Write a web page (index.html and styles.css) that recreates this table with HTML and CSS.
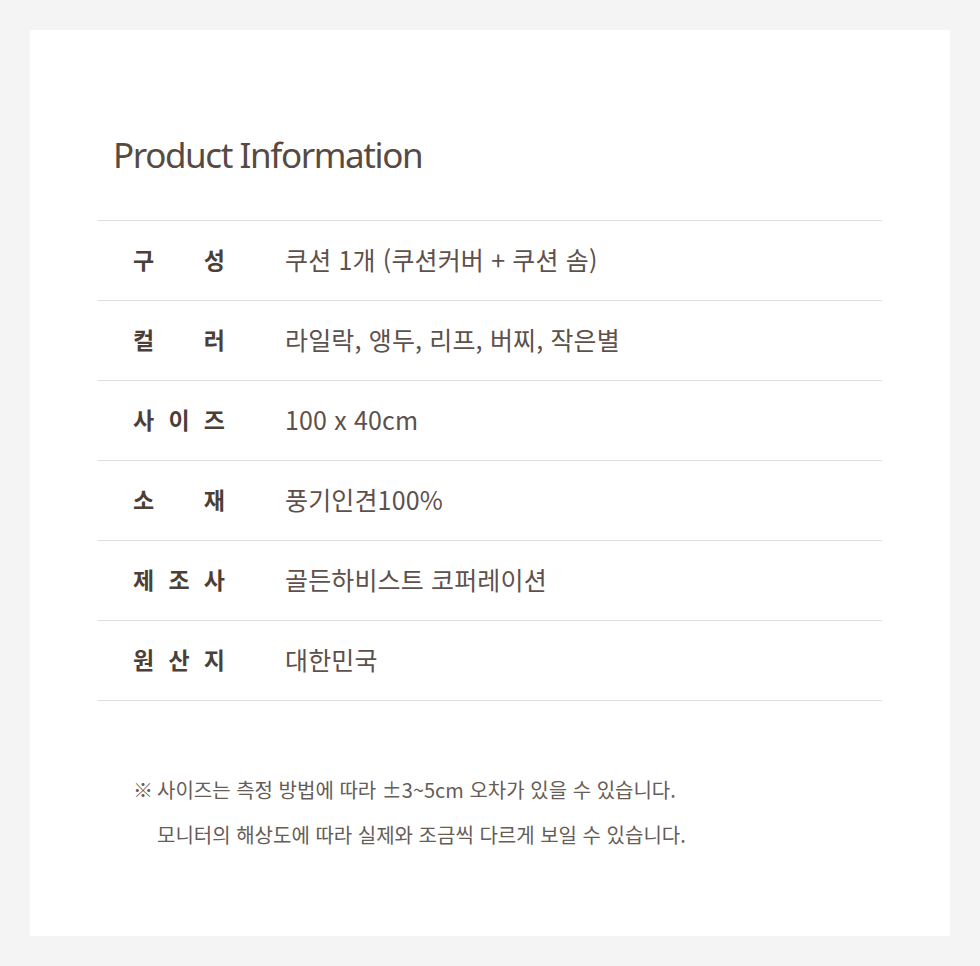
FILE: index.html
```html
<!DOCTYPE html>
<html lang="ko">
<head>
<meta charset="utf-8">
<title>Product Information</title>
<link rel="stylesheet" href="styles.css">
</head>
<body>
<main class="card">
  <h1 class="title">Product Information</h1>
  <table class="info">
    <tbody>
      <tr><th><span class="lbl"><span>구</span><span>성</span></span></th><td>쿠션 1개 (쿠션커버 + 쿠션 솜)</td></tr>
      <tr><th><span class="lbl"><span>컬</span><span>러</span></span></th><td>라일락, 앵두, 리프, 버찌, 작은별</td></tr>
      <tr><th><span class="lbl"><span>사</span><span>이</span><span>즈</span></span></th><td>100 x 40cm</td></tr>
      <tr><th><span class="lbl"><span>소</span><span>재</span></span></th><td>풍기인견100%</td></tr>
      <tr><th><span class="lbl"><span>제</span><span>조</span><span>사</span></span></th><td>골든하비스트 코퍼레이션</td></tr>
      <tr><th><span class="lbl"><span>원</span><span>산</span><span>지</span></span></th><td>대한민국</td></tr>
    </tbody>
  </table>
  <ul class="notes">
    <li><span class="mark">※</span>사이즈는 측정 방법에 따라 ±3~5cm 오차가 있을 수 있습니다.</li>
    <li><span class="mark"></span>모니터의 해상도에 따라 실제와 조금씩 다르게 보일 수 있습니다.</li>
  </ul>
</main>
</body>
</html>
```

FILE: styles.css
```css
html, body {
  margin: 0;
  padding: 0;
}
body {
  background: #f4f4f4;
  padding: 30px;
  font-family: "Noto Sans CJK KR", "Noto Sans", sans-serif;
}
.card {
  background: #ffffff;
  height: 906px;
  box-sizing: border-box;
  padding: 105px 68px 0 68px;
}
.title {
  margin: 0 0 45px 15px;
  font-family: "Noto Sans", "Noto Sans CJK KR", sans-serif;
  font-size: 35px;
  font-weight: 400;
  line-height: 40px;
  letter-spacing: -1.4px;
  color: #574a43;
}
.info {
  width: 100%;
  border-collapse: collapse;
  border-top: 1px solid #dddddd;
}
.info tr {
  border-bottom: 1px solid #dddddd;
}
.info th, .info td {
  height: 75px;
  padding: 0 0 4px 0;
  vertical-align: middle;
  text-align: left;
}
.info th {
  width: 152px;
  padding-left: 35px;
}
.lbl {
  display: flex;
  justify-content: space-between;
  width: 92px;
  font-size: 23px;
  font-weight: 700;
  color: #4b3f38;
}
.info td {
  font-size: 25px;
  font-weight: 400;
  color: #5e514b;
  letter-spacing: 0.15px;
}
.notes {
  list-style: none;
  margin: 66px 0 0 35px;
  padding: 0;
  font-size: 20px;
  line-height: 45px;
  color: #675c56;
  letter-spacing: 0;
}
.mark {
  display: inline-block;
  width: 24px;
}
```
